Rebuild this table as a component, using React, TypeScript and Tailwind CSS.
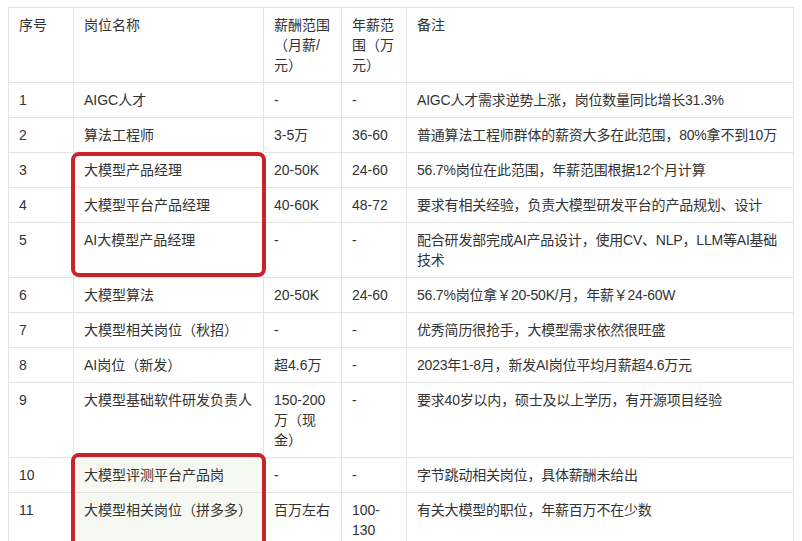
const rows: [string, string, string, string, string, boolean?][] = [
  ['1', 'AIGC人才', '-', '-', 'AIGC人才需求逆势上涨，岗位数量同比增长31.3%'],
  ['2', '算法工程师', '3-5万', '36-60', '普通算法工程师群体的薪资大多在此范围，80%拿不到10万'],
  ['3', '大模型产品经理', '20-50K', '24-60', '56.7%岗位在此范围，年薪范围根据12个月计算'],
  ['4', '大模型平台产品经理', '40-60K', '48-72', '要求有相关经验，负责大模型研发平台的产品规划、设计'],
  ['5', 'AI大模型产品经理', '-', '-', '配合研发部完成AI产品设计，使用CV、NLP，LLM等AI基础技术'],
  ['6', '大模型算法', '20-50K', '24-60', '56.7%岗位拿￥20-50K/月，年薪￥24-60W'],
  ['7', '大模型相关岗位（秋招）', '-', '-', '优秀简历很抢手，大模型需求依然很旺盛'],
  ['8', 'AI岗位（新发）', '超4.6万', '-', '2023年1-8月，新发AI岗位平均月薪超4.6万元'],
  ['9', '大模型基础软件研发负责人', '150-200万（现金）', '-', '要求40岁以内，硕士及以上学历，有开源项目经验'],
  ['10', '大模型评测平台产品岗', '-', '-', '字节跳动相关岗位，具体薪酬未给出', true],
  ['11', '大模型相关岗位（拼多多）', '百万左右', '100-130', '有关大模型的职位，年薪百万不在少数', true],
];

const cell = 'border border-[#e4e4e4] px-[10px] py-[7px] align-top text-left font-normal';

export default function App() {
  return (
    <div
      className="relative w-[802px] h-[541px] overflow-hidden bg-white text-[14px] leading-5 text-[#333333]"
      style={{ fontFamily: '"Liberation Sans", "Noto Sans CJK SC", sans-serif' }}
    >
      <div className="pl-[8px] pt-[7px]">
        <table className="table-fixed border-collapse w-[786px]">
          <colgroup>
            <col className="w-[65px]" />
            <col className="w-[190px]" />
            <col className="w-[78px]" />
            <col className="w-[65px]" />
            <col />
          </colgroup>
          <thead>
            <tr>
              <th className={cell}>序号</th>
              <th className={cell}>岗位名称</th>
              <th className={cell}>薪酬范围（月薪/元）</th>
              <th className={cell}>年薪范围（万元）</th>
              <th className={cell}>备注</th>
            </tr>
          </thead>
          <tbody>
            {rows.map(([no, name, month, year, note, tint]) => (
              <tr key={no}>
                <td className={cell}>{no}</td>
                <td className={`${cell} ${tint ? 'bg-[#f5f9f1]' : ''}`}>{name}</td>
                <td className={cell}>{month}</td>
                <td className={cell}>{year}</td>
                <td className={`${cell} pr-[4px] tracking-[-0.2px]`}>{note}</td>
              </tr>
            ))}
          </tbody>
        </table>
      </div>

      <div className="pointer-events-none absolute left-[71px] top-[152px] w-[195px] h-[125px] rounded-[8px] border-4 border-[#c9232b]" />
      <div className="pointer-events-none absolute left-[71px] top-[453px] w-[195px] h-[120px] rounded-[8px] border-4 border-[#c9232b]" />
    </div>
  );
}
